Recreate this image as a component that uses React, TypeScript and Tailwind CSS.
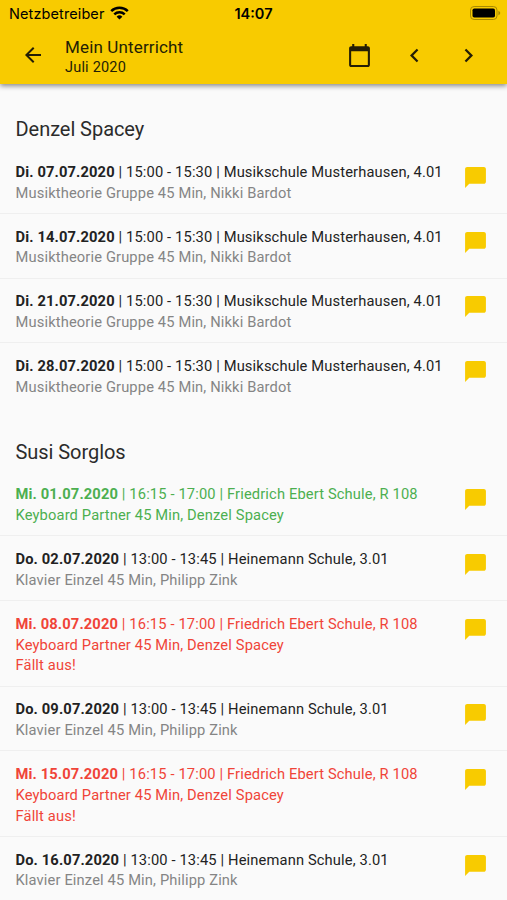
import clsx from 'clsx';
import { MdArrowBack, MdCalendarToday, MdChatBubble, MdChevronLeft, MdChevronRight } from 'react-icons/md';

type Status = 'normal' | 'done' | 'cancelled';

interface Lesson {
  date: string;
  time: string;
  place: string;
  course: string;
  status?: Status;
}

const STUDENTS: { name: string; lessons: Lesson[] }[] = [
  {
    name: 'Denzel Spacey',
    lessons: ['07', '14', '21', '28'].map((day) => ({
      date: `Di. ${day}.07.2020`,
      time: '15:00 - 15:30',
      place: 'Musikschule Musterhausen, 4.01',
      course: 'Musiktheorie Gruppe 45 Min, Nikki Bardot',
    })),
  },
  {
    name: 'Susi Sorglos',
    lessons: [
      { date: 'Mi. 01.07.2020', time: '16:15 - 17:00', place: 'Friedrich Ebert Schule, R 108', course: 'Keyboard Partner 45 Min, Denzel Spacey', status: 'done' },
      { date: 'Do. 02.07.2020', time: '13:00 - 13:45', place: 'Heinemann Schule, 3.01', course: 'Klavier Einzel 45 Min, Philipp Zink' },
      { date: 'Mi. 08.07.2020', time: '16:15 - 17:00', place: 'Friedrich Ebert Schule, R 108', course: 'Keyboard Partner 45 Min, Denzel Spacey', status: 'cancelled' },
      { date: 'Do. 09.07.2020', time: '13:00 - 13:45', place: 'Heinemann Schule, 3.01', course: 'Klavier Einzel 45 Min, Philipp Zink' },
      { date: 'Mi. 15.07.2020', time: '16:15 - 17:00', place: 'Friedrich Ebert Schule, R 108', course: 'Keyboard Partner 45 Min, Denzel Spacey', status: 'cancelled' },
      { date: 'Do. 16.07.2020', time: '13:00 - 13:45', place: 'Heinemann Schule, 3.01', course: 'Klavier Einzel 45 Min, Philipp Zink' },
    ],
  },
];

function StatusBar() {
  return (
    <div className="grid h-7 grid-cols-3 items-center pr-[8px] pl-[9px] font-['Inter'] text-black">
      <div className="flex items-center gap-[6px] text-[14.5px] tracking-[0.1px]">
        Netzbetreiber
        <svg className="-mt-0.5" width="19" height="14" viewBox="0 0 19 14" fill="none" stroke="currentColor" strokeWidth="2.5">
          <path d="M1.2 5.1a11.8 11.8 0 0 1 16.6 0" />
          <path d="M4.3 8.4a7.4 7.4 0 0 1 10.4 0" />
          <path d="M9.5 13.6 6.6 10.7a4.1 4.1 0 0 1 5.8 0z" fill="currentColor" stroke="none" />
        </svg>
      </div>
      <div className="pr-px text-center text-[14.5px] font-semibold">14:07</div>
      <svg className="-mr-[2px] -mt-0.5 justify-self-end" width="31" height="14" viewBox="0 0 31 14">
        <rect x="0.5" y="0.5" width="26.5" height="13" rx="3.6" fill="none" stroke="#a88a00" />
        <rect x="2.5" y="2.5" width="22.5" height="9" rx="1.8" fill="#000" />
        <path d="M28.4 4.7c1.1.4 1.8 1.3 1.8 2.3s-.7 1.9-1.8 2.3z" fill="#a88a00" />
      </svg>
    </div>
  );
}

function AppBar() {
  return (
    <div className="flex h-[54px] items-center pr-[25px] pl-[21px] text-[#241e05]">
      <MdArrowBack className="size-6" />
      <div className="ml-5 flex-1 pt-[5px]">
        <div className="text-[17px] leading-[21px] tracking-[0.15px]">Mein Unterricht</div>
        <div className="text-[14.5px] leading-[20px] tracking-[0.2px]">Juli 2020</div>
      </div>
      <MdCalendarToday className="size-[25px]" />
      <MdChevronLeft className="ml-[29px] size-[27px]" />
      <MdChevronRight className="ml-[27px] size-[27px]" />
    </div>
  );
}

function LessonRow({ lesson }: { lesson: Lesson }) {
  const { date, time, place, course, status = 'normal' } = lesson;
  return (
    <li
      className={clsx(
        'flex items-start justify-between border-b border-[#efefef] pt-[12.75px] pr-[19px] pb-[9.5px] pl-[15.5px] last:border-transparent',
        status === 'normal' && 'text-[#222222]',
        status === 'done' && 'text-[#4caf50]',
        status === 'cancelled' && 'text-[#f04438]',
      )}
    >
      <div className="text-[14.7px] leading-[20.75px] tracking-[0.14px] whitespace-nowrap">
        <div>
          <b className="font-bold">{date}</b> | {time} | {place}
        </div>
        <div className={clsx(status === 'normal' && 'text-[#858585]')}>{course}</div>
        {status === 'cancelled' && <div>Fällt aus!</div>}
      </div>
      <MdChatBubble className="mt-[3px] size-[25px] text-[#f8cb00]" />
    </li>
  );
}

export default function App() {
  return (
    <div className="flex h-[900px] w-[507px] flex-col overflow-hidden bg-[#fafafa] font-['Roboto',sans-serif]">
      <header className="z-10 h-[84px] shrink-0 bg-[#f8cb00] shadow-[0_2px_5px_rgba(0,0,0,0.45)]">
        <StatusBar />
        <AppBar />
      </header>
      <main className="pt-[25px]">
        {STUDENTS.map((student) => (
          <section key={student.name} className="mb-[23.7px]">
            <h2 className="pl-[15.5px] text-[20px] leading-[40px] tracking-[-0.05px] text-[#2b2b2b]">{student.name}</h2>
            <ul>
              {student.lessons.map((lesson) => (
                <LessonRow key={lesson.date} lesson={lesson} />
              ))}
            </ul>
          </section>
        ))}
      </main>
    </div>
  );
}
